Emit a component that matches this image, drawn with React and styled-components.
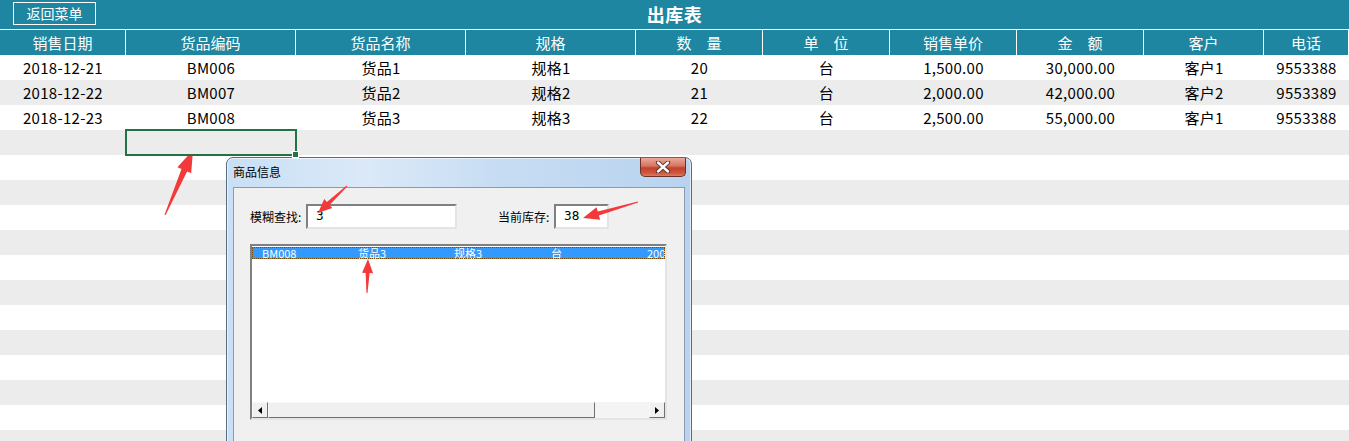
import React from "react";
import styled, { createGlobalStyle } from "styled-components";

const GlobalStyle = createGlobalStyle`
  body {
    margin: 0;
    font-family: "Noto Sans CJK SC", "Noto Sans", sans-serif;
    background: #fff;
  }
`;

const columns = [
  { title: "销售日期", key: "date" },
  { title: "货品编码", key: "code" },
  { title: "货品名称", key: "name" },
  { title: "规格", key: "spec" },
  { title: "数\u3000量", key: "qty" },
  { title: "单\u3000位", key: "unit" },
  { title: "销售单价", key: "price" },
  { title: "金\u3000额", key: "amount" },
  { title: "客户", key: "customer" },
  { title: "电话", key: "phone" },
];

const rows = [
  { date: "2018-12-21", code: "BM006", name: "货品1", spec: "规格1", qty: "20", unit: "台", price: "1,500.00", amount: "30,000.00", customer: "客户1", phone: "9553388" },
  { date: "2018-12-22", code: "BM007", name: "货品2", spec: "规格2", qty: "21", unit: "台", price: "2,000.00", amount: "42,000.00", customer: "客户2", phone: "9553389" },
  { date: "2018-12-23", code: "BM008", name: "货品3", spec: "规格3", qty: "22", unit: "台", price: "2,500.00", amount: "55,000.00", customer: "客户1", phone: "9553388" },
];

const EMPTY_ROWS = 13;

const arrows = [
  { tail: [165, 215], tip: [193, 150], head: 22, width: 15, shaft: 6 },
  { tail: [347, 186], tip: [318, 213], head: 14, width: 12, shaft: 4 },
  { tail: [638, 202], tip: [583, 218], head: 16, width: 13, shaft: 4 },
  { tail: [367, 293], tip: [368, 259], head: 14, width: 11, shaft: 4 },
];

function arrowPoints({ tail, tip, head, width, shaft }) {
  const dx = tip[0] - tail[0];
  const dy = tip[1] - tail[1];
  const len = Math.hypot(dx, dy);
  const ux = dx / len;
  const uy = dy / len;
  const nx = -uy;
  const ny = ux;
  const bx = tip[0] - ux * head;
  const by = tip[1] - uy * head;
  const p = (x, y) => `${x.toFixed(1)},${y.toFixed(1)}`;
  return [
    p(tail[0] + nx * 0.5, tail[1] + ny * 0.5),
    p(bx + nx * (shaft / 2), by + ny * (shaft / 2)),
    p(bx + nx * (width / 2), by + ny * (width / 2)),
    p(tip[0], tip[1]),
    p(bx - nx * (width / 2), by - ny * (width / 2)),
    p(bx - nx * (shaft / 2), by - ny * (shaft / 2)),
    p(tail[0] - nx * 0.5, tail[1] - ny * 0.5),
  ].join(" ");
}

export default function App() {
  return (
    <>
      <GlobalStyle />
      <Page>
        <TitleBar>
          <div>
            <MenuButton>返回菜单</MenuButton>
          </div>
          <Title>出库表</Title>
          <div />
        </TitleBar>
        <Grid>
          {columns.map((c) => (
            <HeadCell key={c.key}>{c.title}</HeadCell>
          ))}
          {rows.map((r, i) =>
            columns.map((c) => (
              <Cell key={c.key + i} $stripe={i % 2 === 1}>
                {r[c.key]}
              </Cell>
            ))
          )}
          {Array.from({ length: EMPTY_ROWS }).map((_, i) =>
            columns.map((c, j) => (
              <Cell
                key={"e" + i + c.key}
                $stripe={(i + 3) % 2 === 1}
                $selected={i === 0 && j === 1}
              />
            ))
          )}
        </Grid>

        <Dialog>
          <Caption>
            <CaptionText>商品信息</CaptionText>
            <CloseButton>
              <svg width="16" height="12" viewBox="0 0 16 12">
                <path
                  d="M3 1.5 L13 10.5 M13 1.5 L3 10.5"
                  stroke="#4a2a25"
                  strokeWidth="4.2"
                  strokeLinecap="round"
                />
                <path
                  d="M3 1.5 L13 10.5 M13 1.5 L3 10.5"
                  stroke="#ffffff"
                  strokeWidth="2.4"
                  strokeLinecap="round"
                />
              </svg>
            </CloseButton>
          </Caption>
          <Client>
            <SearchRow>
              <Label>模糊查找:</Label>
              <Field $width={151}>3</Field>
              <Spacer />
              <Label>当前库存:</Label>
              <Field $width={55}>38</Field>
            </SearchRow>
            <ListBox>
              <ListBody>
                <ListItem>
                  <ListCol $width={96}>BM008</ListCol>
                  <ListCol $width={96}>货品3</ListCol>
                  <ListCol $width={97}>规格3</ListCol>
                  <ListCol $width={96}>台</ListCol>
                  <ListCol $width={40}>2000</ListCol>
                </ListItem>
              </ListBody>
              <HScroll>
                <ScrollArrow>
                  <svg width="4" height="7" viewBox="0 0 4 7">
                    <path d="M4 0 L0 3.5 L4 7 Z" fill="#000" />
                  </svg>
                </ScrollArrow>
                <Thumb />
                <Track />
                <ScrollArrow>
                  <svg width="4" height="7" viewBox="0 0 4 7">
                    <path d="M0 0 L4 3.5 L0 7 Z" fill="#000" />
                  </svg>
                </ScrollArrow>
              </HScroll>
            </ListBox>
          </Client>
        </Dialog>

        <Overlay width="1349" height="441" viewBox="0 0 1349 441">
          {arrows.map((a, i) => (
            <polygon key={i} points={arrowPoints(a)} fill="#f23a3a" />
          ))}
        </Overlay>
      </Page>
    </>
  );
}

const Page = styled.div`
  position: relative;
  width: 1349px;
  height: 441px;
  overflow: hidden;
  background: #fff;
`;

const TitleBar = styled.div`
  display: grid;
  grid-template-columns: 1fr auto 1fr;
  align-items: center;
  height: 30px;
  background: #1e86a0;
  border-bottom: 1px solid #ffffff;
  box-sizing: border-box;
`;

const MenuButton = styled.div`
  margin-left: 13px;
  width: 83px;
  height: 23px;
  box-sizing: border-box;
  border: 1px solid #ffffff;
  color: #ffffff;
  font-size: 14px;
  line-height: 21px;
  text-align: center;
  margin-top: -2px;
`;

const Title = styled.div`
  color: #ffffff;
  font-size: 18px;
  font-weight: bold;
  letter-spacing: 0.5px;
  margin-top: -2px;
`;

const Grid = styled.div`
  display: grid;
  grid-template-columns: 126px 170px 170px 170px 127px 127px 127px 127px 120px 1fr;
  grid-auto-rows: 25px;
`;

const HeadCell = styled.div`
  background: #1e86a0;
  color: #ffffff;
  font-size: 15px;
  display: flex;
  align-items: center;
  justify-content: center;
  border-right: 1px solid #ffffff;
  box-sizing: border-box;
  white-space: pre;
  &:last-of-type {
    border-right: none;
  }
`;

const Cell = styled.div`
  position: relative;
  background: ${(p) => (p.$stripe ? "#ececec" : "#ffffff")};
  color: #000;
  font-size: 15px;
  letter-spacing: 0.3px;
  display: flex;
  align-items: center;
  justify-content: center;
  ${(p) =>
    p.$selected &&
    `
    outline: 2px solid #217346;
    outline-offset: -1px;
    z-index: 1;
    &::after {
      content: "";
      position: absolute;
      right: -3px;
      bottom: -3px;
      width: 5px;
      height: 5px;
      background: #217346;
      border: 1px solid #fff;
    }
  `}
`;

const Dialog = styled.div`
  position: absolute;
  left: 226px;
  top: 157px;
  width: 466px;
  height: 292px;
  box-sizing: border-box;
  border: 1px solid #5a6b7e;
  border-radius: 7px 7px 0 0;
  background: linear-gradient(
    to right,
    #c9dff5 0%,
    #dbe9f8 30%,
    #c6dcf3 60%,
    #b9d3ef 100%
  );
  padding: 0 6px;
  display: flex;
  flex-direction: column;
  box-shadow: inset 0 0 0 1px rgba(255, 255, 255, 0.6);
`;

const Caption = styled.div`
  height: 29px;
  display: flex;
  align-items: flex-start;
  justify-content: space-between;
`;

const CaptionText = styled.div`
  font-size: 12px;
  color: #000;
  margin-top: 7px;
  line-height: 14px;
`;

const CloseButton = styled.div`
  width: 46px;
  height: 19px;
  margin-right: -1px;
  box-sizing: border-box;
  border: 1px solid #6b3128;
  border-top: none;
  border-radius: 0 0 5px 5px;
  background: linear-gradient(
    to bottom,
    #e9a99b 0%,
    #d7735f 45%,
    #c0412a 55%,
    #d0593f 85%,
    #e07a5f 100%
  );
  display: flex;
  align-items: center;
  justify-content: center;
`;

const Client = styled.div`
  flex: 1;
  background: #f0f0f0;
  border: 1px solid #8a9bb0;
  padding: 16px 18px 0 16px;
`;

const SearchRow = styled.div`
  display: flex;
  align-items: center;
  height: 25px;
`;

const Label = styled.div`
  font-size: 12px;
  color: #000;
  width: 56px;
`;

const Field = styled.div`
  width: ${(p) => p.$width}px;
  height: 25px;
  box-sizing: border-box;
  background: #fff;
  border: 2px solid;
  border-color: #808080 #e4e4e4 #e4e4e4 #808080;
  font-size: 12px;
  line-height: 20px;
  padding-left: 8px;
  font-family: "DejaVu Sans", sans-serif;
`;

const Spacer = styled.div`
  width: 41px;
`;

const ListBox = styled.div`
  margin-top: 15px;
  width: 417px;
  height: 176px;
  box-sizing: border-box;
  border: 2px solid;
  border-color: #808080 #e4e4e4 #e4e4e4 #808080;
  background: #fff;
  display: flex;
  flex-direction: column;
`;

const ListBody = styled.div`
  flex: 1;
  padding-top: 1px;
  overflow: hidden;
`;

const ListItem = styled.div`
  display: flex;
  align-items: center;
  height: 12px;
  background: #3399ff;
  outline: 1px dotted #7a4a00;
  outline-offset: -1px;
  color: #fff;
  font-size: 11px;
  line-height: 12px;
  padding-left: 10px;
  white-space: nowrap;
`;

const ListCol = styled.div`
  flex: none;
  width: ${(p) => p.$width}px;
`;

const HScroll = styled.div`
  display: flex;
  height: 16px;
  background: #f0f0f0;
`;

const ScrollArrow = styled.div`
  width: 16px;
  height: 16px;
  box-sizing: border-box;
  border: 1px solid;
  border-color: #f8f8f8 #707070 #707070 #f8f8f8;
  background: #f0f0f0;
  display: flex;
  align-items: center;
  justify-content: center;
`;

const Thumb = styled.div`
  width: 327px;
  box-sizing: border-box;
  border: 1px solid;
  border-color: #f8f8f8 #707070 #707070 #f8f8f8;
  background: #f0f0f0;
`;

const Track = styled.div`
  flex: 1;
  background-color: #f4f4f4;
  background-image: radial-gradient(#e2e2e2 0.6px, transparent 0.6px);
  background-size: 2px 2px;
`;

const Overlay = styled.svg`
  position: absolute;
  left: 0;
  top: 0;
  pointer-events: none;
`;
